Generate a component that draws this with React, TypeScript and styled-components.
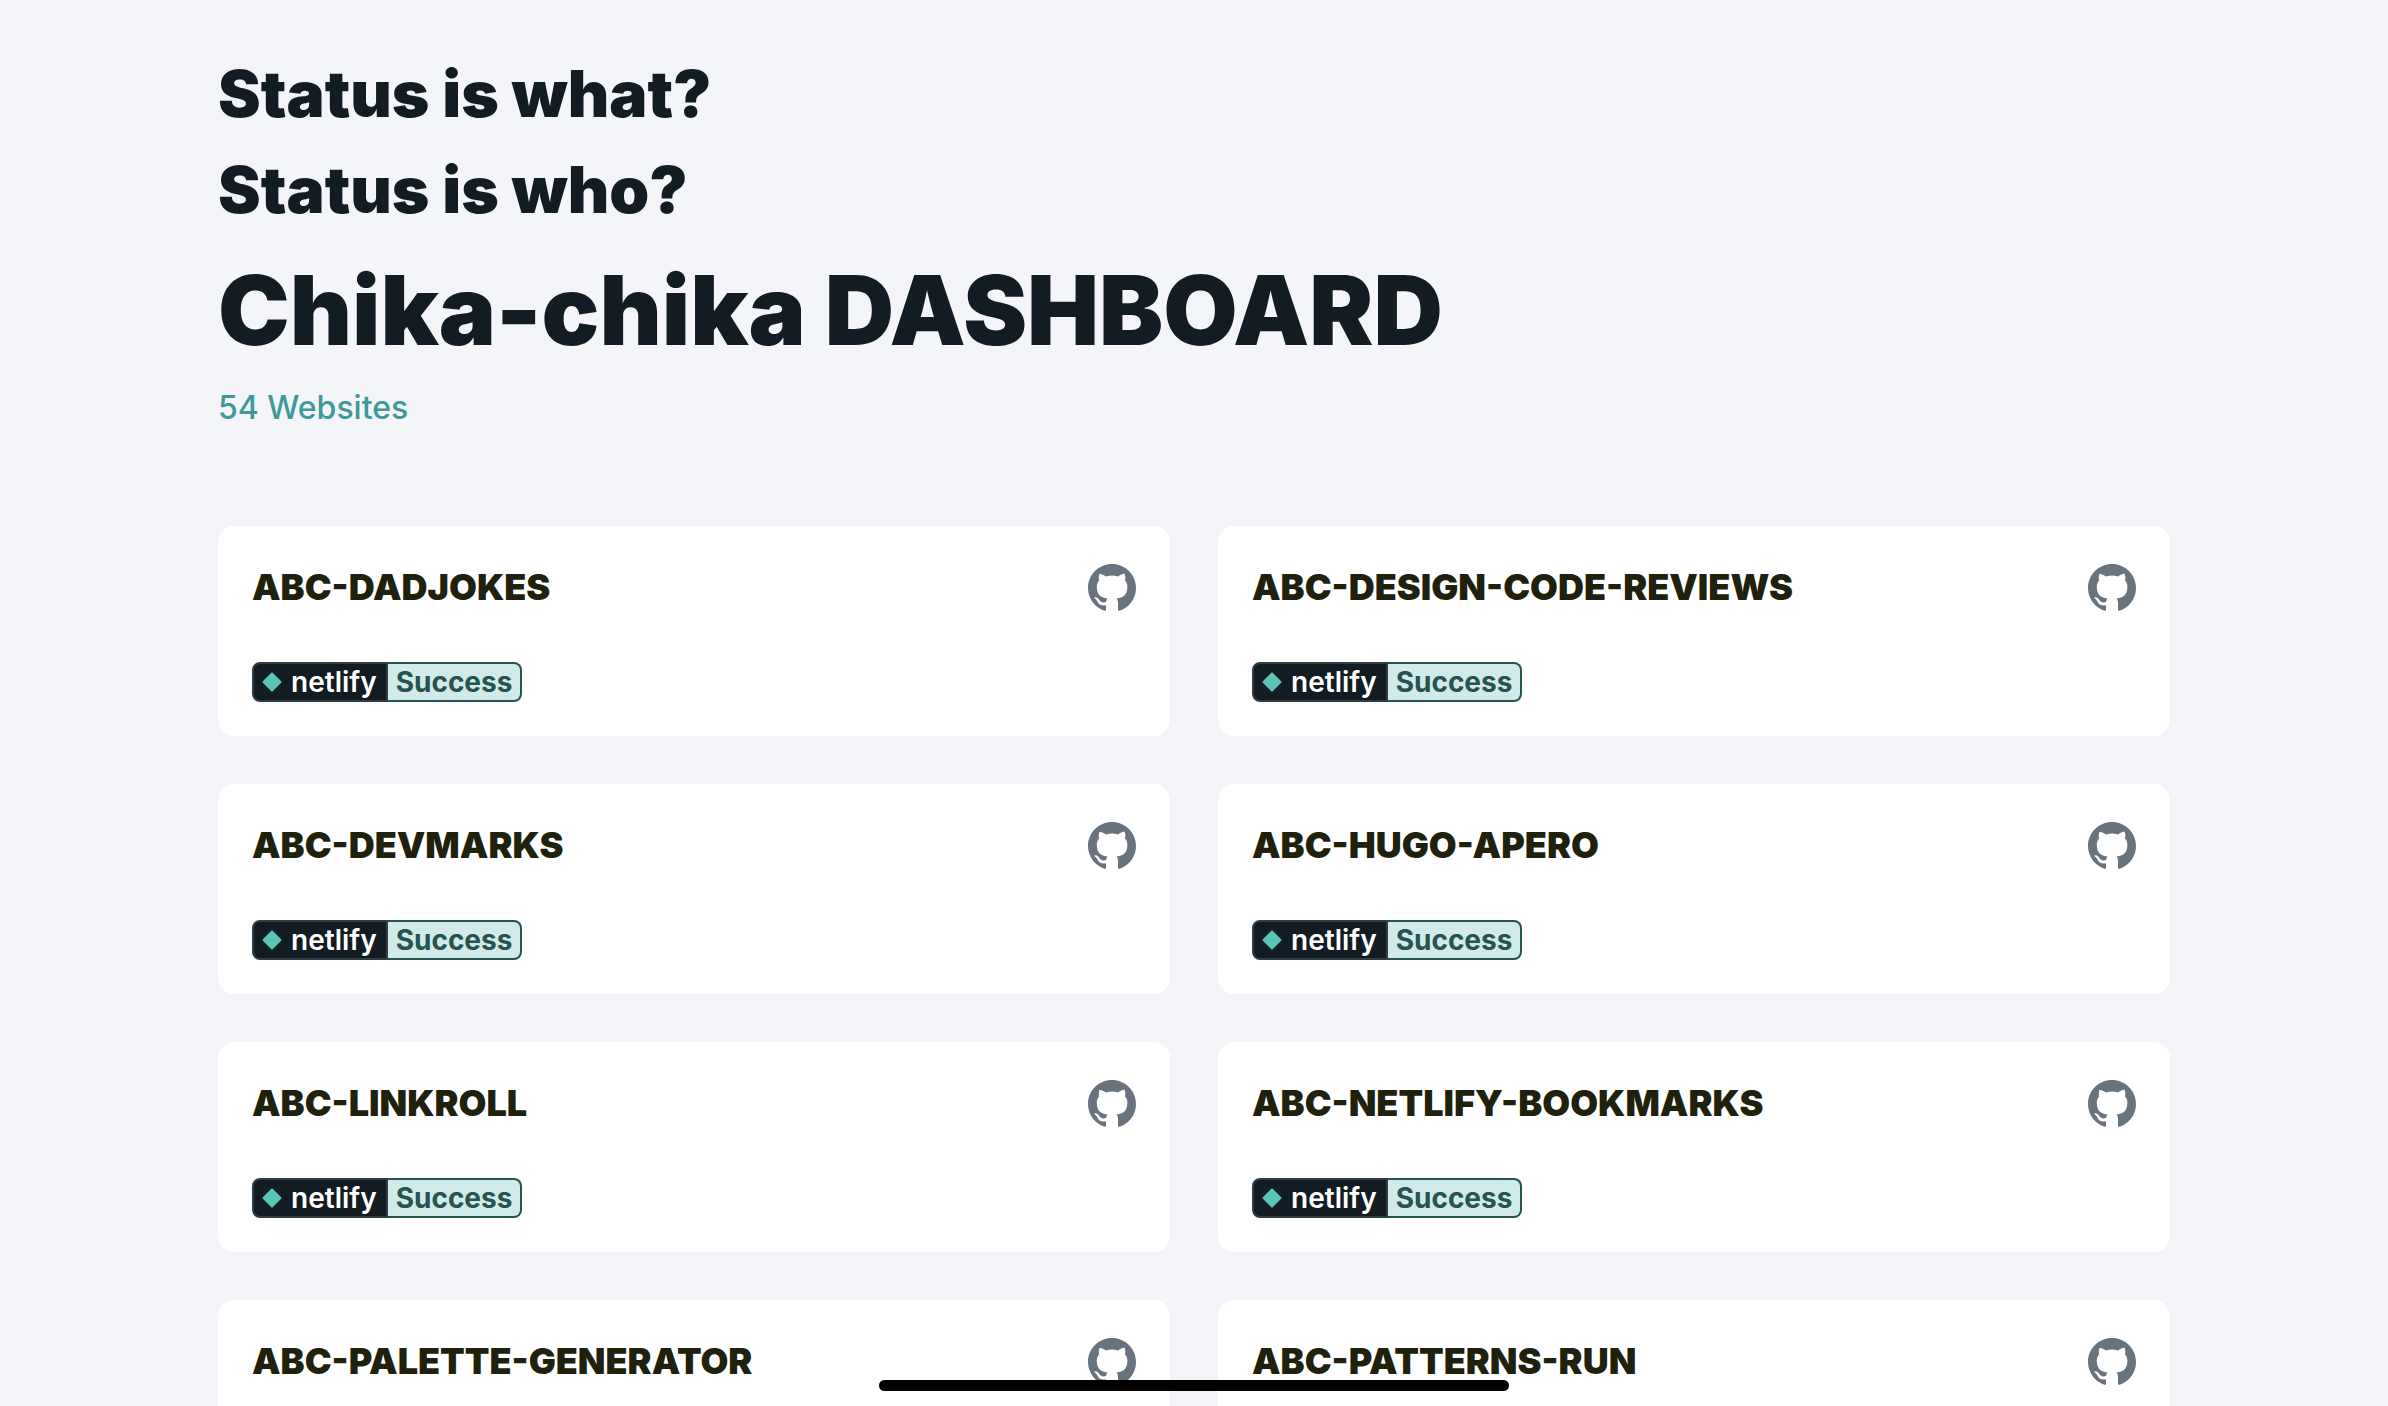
import React from "react";
import styled, { createGlobalStyle } from "styled-components";

const GlobalStyle = createGlobalStyle`
  *, *::before, *::after { box-sizing: border-box; }
  html { scrollbar-width: none; }
  body {
    margin: 0;
    background: #f3f5f9;
    color: #131c22;
    font-family: Inter, "Liberation Sans", sans-serif;
  }
`;

const Page = styled.div`
  width: 100%;
  max-width: 1952px;
  margin: 0 auto;
  padding: 46px 0 48px;
`;

const Header = styled.header`
  margin-bottom: 92px;
`;

const Question = styled.h2`
  margin: 0;
  font-size: 64px;
  line-height: 96px;
  font-weight: 900;
`;

const Title = styled.h1`
  margin: 0;
  padding-top: 12px;
  font-size: 96px;
  line-height: 120px;
  font-weight: 900;
`;

const Count = styled.p`
  margin: 12px 0 0;
  font-size: 32px;
  line-height: 52px;
  font-weight: 500;
  color: #3f9899;
`;

const Grid = styled.ul`
  display: grid;
  grid-template-columns: repeat(2, minmax(0, 1fr));
  gap: 48px;
  margin: 0;
  padding: 0;
  list-style: none;
`;

const Card = styled.li`
  display: flex;
  flex-direction: column;
  gap: 46px;
  padding: 34px;
  border-radius: 16px;
  background: #ffffff;
`;

const CardTop = styled.div`
  display: flex;
  align-items: center;
  justify-content: space-between;
  height: 56px;
`;

const SiteName = styled.h3`
  margin: 0;
  padding-bottom: 2px;
  font-size: 36px;
  line-height: 48px;
  font-weight: 900;
`;

const SiteLink = styled.a`
  color: #20210d;
  text-decoration: none;
`;

const RepoLink = styled.a`
  display: flex;
  color: #69737d;
`;

const Badge = styled.a`
  display: flex;
  align-self: flex-start;
  height: 40px;
  font-size: 28px;
  line-height: 36px;
  text-decoration: none;
`;

const BadgeBrand = styled.span`
  display: flex;
  align-items: center;
  gap: 9px;
  padding: 0 9px 0 8px;
  border: 2px solid #313d44;
  border-radius: 8px 0 0 8px;
  background: #131c22;
  color: #ffffff;
  font-weight: 600;
`;

const BadgeStatus = styled.span`
  padding: 0 8px;
  border: 2px solid #255451;
  border-left: 0;
  border-radius: 0 8px 8px 0;
  background: #d0ebea;
  color: #255451;
  font-weight: 700;
`;

const HomeIndicator = styled.div`
  position: fixed;
  left: 50%;
  bottom: 15px;
  width: 630px;
  height: 11px;
  border-radius: 6px;
  background: #000000;
  transform: translateX(-50%);
`;

const sites = [
  "ABC-DADJOKES",
  "ABC-DESIGN-CODE-REVIEWS",
  "ABC-DEVMARKS",
  "ABC-HUGO-APERO",
  "ABC-LINKROLL",
  "ABC-NETLIFY-BOOKMARKS",
  "ABC-PALETTE-GENERATOR",
  "ABC-PATTERNS-RUN",
];

const GithubMark = () => (
  <svg width="48" height="48" viewBox="0 0 16 16" fill="currentColor" aria-hidden="true">
    <path d="M8 0C3.58 0 0 3.58 0 8c0 3.54 2.29 6.53 5.47 7.59.4.07.55-.17.55-.38 0-.19-.01-.82-.01-1.49-2.01.37-2.53-.49-2.69-.94-.09-.23-.48-.94-.82-1.13-.28-.15-.68-.52-.01-.53.63-.01 1.08.58 1.23.82.72 1.21 1.87.87 2.33.66.07-.52.28-.87.51-1.07-1.78-.2-3.64-.89-3.64-3.95 0-.87.31-1.59.82-2.15-.08-.2-.36-1.02.08-2.12 0 0 .67-.21 2.2.82.64-.18 1.32-.27 2-.27.68 0 1.36.09 2 .27 1.53-1.04 2.2-.82 2.2-.82.44 1.1.16 1.92.08 2.12.51.56.82 1.27.82 2.15 0 3.07-1.87 3.75-3.65 3.95.29.25.54.73.54 1.48 0 1.07-.01 1.93-.01 2.2 0 .21.15.46.55.38A8.013 8.013 0 0016 8c0-4.42-3.58-8-8-8z" />
  </svg>
);

const Diamond = () => (
  <svg width="20" height="20" viewBox="0 0 20 20" aria-hidden="true">
    <rect x="3" y="3" width="14" height="14" rx="1" fill="#5ac4b7" transform="rotate(45 10 10)" />
  </svg>
);

const SiteCard = ({ name }: { name: string }) => (
  <Card>
    <CardTop>
      <SiteName>
        <SiteLink href="#">{name}</SiteLink>
      </SiteName>
      <RepoLink href="#" aria-label={`${name} on GitHub`}>
        <GithubMark />
      </RepoLink>
    </CardTop>
    <Badge href="#">
      <BadgeBrand>
        <Diamond />
        netlify
      </BadgeBrand>
      <BadgeStatus>Success</BadgeStatus>
    </Badge>
  </Card>
);

export default function App() {
  return (
    <>
      <GlobalStyle />
      <Page>
        <Header>
          <Question>Status is what?</Question>
          <Question>Status is who?</Question>
          <Title>Chika-chika DASHBOARD</Title>
          <Count>54 Websites</Count>
        </Header>
        <Grid>
          {sites.map((name) => (
            <SiteCard key={name} name={name} />
          ))}
        </Grid>
      </Page>
      <HomeIndicator />
    </>
  );
}
